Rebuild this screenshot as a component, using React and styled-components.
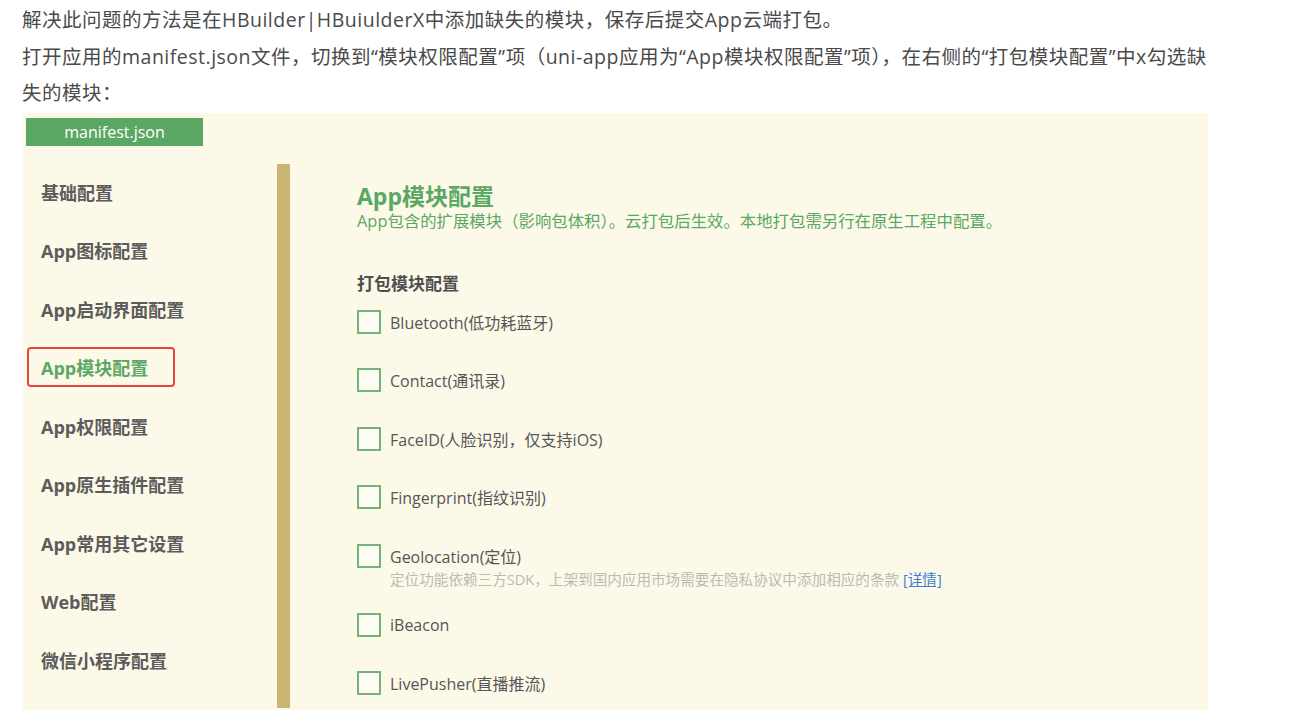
import React from 'react';
import styled, { createGlobalStyle } from 'styled-components';

const GlobalStyle = createGlobalStyle`
  html, body {
    margin: 0;
    padding: 0;
    background: #ffffff;
  }
  body {
    font-family: 'Noto Sans CJK SC', 'Noto Sans', sans-serif;
  }
`;

const Page = styled.div`
  width: 1292px;
  height: 711px;
  overflow: hidden;
  padding: 0 0 0 22px;
  box-sizing: border-box;
`;

const Intro = styled.div`
  width: 1192px;
  color: #4a4a4a;
  font-size: 19.5px;
  letter-spacing: 0.5px;
  line-height: 36.5px;
  padding-top: 2px;
  font-family: 'Open Sans', 'Noto Sans CJK SC', sans-serif;
`;

const Shot = styled.div`
  margin-top: 1px;
  margin-left: 1px;
  width: 1185px;
  height: 597px;
  background: #fcf9e9;
  display: flex;
  flex-direction: column;
  overflow: hidden;
`;

const Tab = styled.div`
  margin: 5px 0 0 3px;
  width: 177px;
  height: 28px;
  background: #5aa864;
  color: #ffffff;
  font-size: 16px;
  line-height: 28px;
  text-align: center;
  font-family: 'Open Sans', 'Noto Sans CJK SC', sans-serif;
`;

const Body = styled.div`
  display: flex;
  flex: 1;
  min-height: 0;
  padding-top: 18px;
`;

const Nav = styled.ul`
  list-style: none;
  margin: 0;
  padding: 8px 0 0 4px;
  width: 250px;
  display: flex;
  flex-direction: column;
  gap: 18.5px;
`;

const NavItem = styled.li`
  box-sizing: border-box;
  height: 40px;
  width: 148px;
  padding-left: 12px;
  display: flex;
  align-items: center;
  font-size: 18px;
  font-weight: 700;
  color: ${(p) => (p.$active ? '#5aa864' : '#5c5c5c')};
  border: 2px solid ${(p) => (p.$active ? '#e5453a' : 'transparent')};
  border-radius: 4px;
  font-family: 'Open Sans', 'Noto Sans CJK SC', sans-serif;
  white-space: nowrap;
`;

const Divider = styled.div`
  width: 13px;
  background: #c9b673;
  margin-bottom: 2px;
`;

const Content = styled.div`
  padding: 18px 0 0 67px;
  flex: 1;
`;

const Title = styled.h1`
  margin: 0;
  font-size: 23px;
  line-height: 28px;
  font-weight: 700;
  color: #5aa864;
  font-family: 'Open Sans', 'Noto Sans CJK SC', sans-serif;
`;

const Subtitle = styled.p`
  margin: 0;
  font-size: 16.4px;
  line-height: 22px;
  color: #5aa864;
  font-family: 'Open Sans', 'Noto Sans CJK SC', sans-serif;
`;

const SectionTitle = styled.h2`
  margin: 39px 0 0;
  font-size: 17px;
  line-height: 24px;
  font-weight: 700;
  color: #4f4f4f;
`;

const ModuleList = styled.div`
  margin-top: 14px;
  display: flex;
  flex-direction: column;
`;

const Module = styled.div`
  height: ${(p) => (p.$tall ? '69px' : '58.5px')};
`;

const Row = styled.label`
  display: flex;
  align-items: center;
  gap: 9px;
  height: 26px;
  font-size: 16px;
  color: #555555;
  font-family: 'Open Sans', 'Noto Sans CJK SC', sans-serif;
`;

const Box = styled.span`
  width: 20px;
  height: 20px;
  border: 2px solid #74b47b;
  background: #fdfcf4;
  flex-shrink: 0;
`;

const Hint = styled.div`
  margin: 0 0 0 33px;
  font-size: 14.6px;
  line-height: 20px;
  color: #bbbbb3;
  font-family: 'Open Sans', 'Noto Sans CJK SC', sans-serif;

  a {
    color: #3d7fd6;
    text-decoration: underline;
  }
`;

const navItems = [
  '基础配置',
  'App图标配置',
  'App启动界面配置',
  'App模块配置',
  'App权限配置',
  'App原生插件配置',
  'App常用其它设置',
  'Web配置',
  '微信小程序配置',
];

const modules = [
  { name: 'Bluetooth(低功耗蓝牙)' },
  { name: 'Contact(通讯录)' },
  { name: 'FaceID(人脸识别，仅支持iOS)' },
  { name: 'Fingerprint(指纹识别)' },
  {
    name: 'Geolocation(定位)',
    hint: '定位功能依赖三方SDK，上架到国内应用市场需要在隐私协议中添加相应的条款',
  },
  { name: 'iBeacon' },
  { name: 'LivePusher(直播推流)' },
];

export default function App() {
  return (
    <Page>
      <GlobalStyle />
      <Intro>
        解决此问题的方法是在HBuilder|HBuiulderX中添加缺失的模块，保存后提交App云端打包。
        <br />
        打开应用的manifest.json文件，切换到“模块权限配置”项（uni-app应用为“App模块权限配置”项），在右侧的“打包模块配置”中x勾选缺失的模块：
      </Intro>
      <Shot>
        <Tab>manifest.json</Tab>
        <Body>
          <Nav>
            {navItems.map((item) => (
              <NavItem key={item} $active={item === 'App模块配置'}>
                {item}
              </NavItem>
            ))}
          </Nav>
          <Divider />
          <Content>
            <Title>App模块配置</Title>
            <Subtitle>
              App包含的扩展模块（影响包体积）。云打包后生效。本地打包需另行在原生工程中配置。
            </Subtitle>
            <SectionTitle>打包模块配置</SectionTitle>
            <ModuleList>
              {modules.map((m) => (
                <Module key={m.name} $tall={!!m.hint}>
                  <Row>
                    <Box />
                    {m.name}
                  </Row>
                  {m.hint && (
                    <Hint>
                      {m.hint} <a>[详情]</a>
                    </Hint>
                  )}
                </Module>
              ))}
            </ModuleList>
          </Content>
        </Body>
      </Shot>
    </Page>
  );
}
